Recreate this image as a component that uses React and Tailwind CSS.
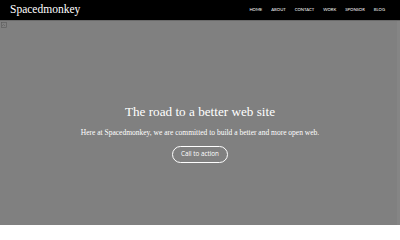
import React from "react";

export default function App() {
  const nav = ["HOME", "ABOUT", "CONTACT", "WORK", "SPONSOR", "BLOG"];
  return (
    <div className="w-[400px] h-[225px] overflow-hidden flex flex-col bg-[#808080]">
      <header className="h-[21px] bg-black flex items-center justify-between pl-[10px] pr-[15px] shrink-0 border-b border-[#6a6a6a]">
        <div className="text-white text-[11.5px] leading-none" style={{ fontFamily: '"Liberation Serif", serif' }}>
          Spacedmonkey
        </div>
        <nav className="flex gap-[9px] text-white text-[4.2px] leading-none" style={{ fontFamily: 'Lato, "Open Sans", sans-serif' }}>
          {nav.map((n) => (
            <span key={n}>{n}</span>
          ))}
        </nav>
      </header>
      <main className="relative flex-1 flex flex-col items-center pt-[84px]">
        <svg className="absolute left-[1px] top-[1px]" width="6" height="6" viewBox="0 0 6 6">
          <rect x="0.5" y="0.5" width="5" height="5" fill="none" stroke="#5a5a5a" strokeWidth="0.6" />
          <path d="M1 4 L2.5 2.5 L4 4" fill="none" stroke="#5a5a5a" strokeWidth="0.6" />
        </svg>
        <div className="absolute right-0 top-0 bottom-0 w-[3px] bg-[#858585]" />
        <h1 className="text-white text-[13.2px] leading-none" style={{ fontFamily: '"Liberation Serif", serif' }}>
          The road to a better web site
        </h1>
        <p className="mt-[11px] text-white text-[7.5px] leading-none" style={{ fontFamily: '"Liberation Serif", serif' }}>
          Here at Spacedmonkey, we are committed to build a better and more open web.
        </p>
        <button className="mt-[9px] w-[56px] h-[17px] rounded-full border border-white text-white text-[6.3px] flex items-center justify-center" style={{ fontFamily: '"Open Sans", sans-serif' }}>
          Call to action
        </button>
      </main>
    </div>
  );
}
